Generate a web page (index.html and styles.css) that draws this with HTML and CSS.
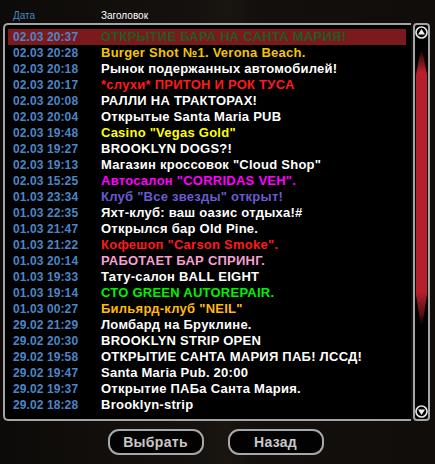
FILE: index.html
```html
<!DOCTYPE html>
<html>
    <head>
        <title>Новости</title>
        <meta charset="UTF-8">
        <link rel="stylesheet" href="styles.css">
    </head>
    <body>
        <div class="dialog">
            <div class="columns">
                <span class="col-date">Дата</span>
                <span class="col-title">Заголовок</span>
            </div>

            <div class="list-wrap">
                <div class="list">
                    <div class="row selected"><span class="date">02.03 20:37</span><span class="title t-green">ОТКРЫТИЕ БАРА НА САНТА МАРИЯ!</span></div>
                    <div class="row"><span class="date">02.03 20:28</span><span class="title t-gold">Burger Shot №1. Verona Beach.</span></div>
                    <div class="row"><span class="date">02.03 20:18</span><span class="title">Рынок подержанных автомобилей!</span></div>
                    <div class="row"><span class="date">02.03 20:17</span><span class="title t-red">*слухи* ПРИТОН И РОК ТУСА</span></div>
                    <div class="row"><span class="date">02.03 20:08</span><span class="title">РАЛЛИ НА ТРАКТОРАХ!</span></div>
                    <div class="row"><span class="date">02.03 20:04</span><span class="title">Открытые Santa Maria PUB</span></div>
                    <div class="row"><span class="date">02.03 19:48</span><span class="title t-yellow">Casino "Vegas Gold"</span></div>
                    <div class="row"><span class="date">02.03 19:27</span><span class="title">BROOKLYN DOGS?!</span></div>
                    <div class="row"><span class="date">02.03 19:13</span><span class="title">Магазин кроссовок "Cloud Shop"</span></div>
                    <div class="row"><span class="date">02.03 15:25</span><span class="title t-magenta">Автосалон "CORRIDAS VEH".</span></div>
                    <div class="row"><span class="date">01.03 23:34</span><span class="title t-slate">Клуб "Все звезды" открыт!</span></div>
                    <div class="row"><span class="date">01.03 22:35</span><span class="title">Яхт-клуб: ваш оазис отдыха!#</span></div>
                    <div class="row"><span class="date">01.03 21:47</span><span class="title">Открылся бар Old Pine.</span></div>
                    <div class="row"><span class="date">01.03 21:22</span><span class="title t-red">Кофешоп "Carson Smoke".</span></div>
                    <div class="row"><span class="date">01.03 20:14</span><span class="title t-pink">РАБОТАЕТ БАР СПРИНГ.</span></div>
                    <div class="row"><span class="date">01.03 19:33</span><span class="title">Тату-салон BALL EIGHT</span></div>
                    <div class="row"><span class="date">01.03 19:14</span><span class="title t-lime">СТО GREEN AUTOREPAIR.</span></div>
                    <div class="row"><span class="date">01.03 00:27</span><span class="title t-orange">Бильярд-клуб "NEIL"</span></div>
                    <div class="row"><span class="date">29.02 21:29</span><span class="title">Ломбард на Бруклине.</span></div>
                    <div class="row"><span class="date">29.02 20:30</span><span class="title">BROOKLYN STRIP OPEN</span></div>
                    <div class="row"><span class="date">29.02 19:58</span><span class="title">ОТКРЫТИЕ САНТА МАРИЯ ПАБ! ЛССД!</span></div>
                    <div class="row"><span class="date">29.02 19:47</span><span class="title">Santa Maria Pub. 20:00</span></div>
                    <div class="row"><span class="date">29.02 19:37</span><span class="title">Открытие ПАБа Санта Мария.</span></div>
                    <div class="row"><span class="date">29.02 18:28</span><span class="title">Brooklyn-strip</span></div>
                </div>

                <div class="scrollbar">
                    <svg class="arrow" width="13" height="13" viewBox="0 0 13 13">
                        <circle cx="6.5" cy="6.5" r="5.5" fill="#000" stroke="#e8e8e8" stroke-width="1.6"/>
                        <path d="M6.5 3 L10 8.5 L3 8.5 Z" fill="#f0f0f0"/>
                    </svg>
                    <div class="track">
                        <div class="thumb"></div>
                    </div>
                    <svg class="arrow" width="13" height="13" viewBox="0 0 13 13">
                        <circle cx="6.5" cy="6.5" r="5.5" fill="#000" stroke="#e8e8e8" stroke-width="1.6"/>
                        <path d="M6.5 10 L10 4.5 L3 4.5 Z" fill="#f0f0f0"/>
                    </svg>
                </div>
            </div>

            <div class="buttons">
                <button class="btn">Выбрать</button>
                <button class="btn">Назад</button>
            </div>
        </div>
    </body>
</html>
```

FILE: styles.css
```css
* {
    box-sizing: border-box;
    margin: 0;
    padding: 0;
}

body {
    width: 435px;
    height: 464px;
    overflow: hidden;
    background: linear-gradient(90deg, #0d0b09 0%, #15110e 45%, #1a1511 52%, #120f0c 60%, #100d0b 100%);
    font-family: 'Liberation Sans', Arial, sans-serif;
    color: #fff;
}

.dialog {
    padding: 8px 5px 0 3px;
}

.columns {
    display: flex;
    height: 15px;
    font-size: 10px;
    line-height: 15px;
}

.col-date {
    width: 98px;
    padding-left: 10px;
    color: #4a86c6;
}

.col-title {
    color: #fff;
}

.list-wrap {
    display: flex;
    gap: 2px;
    height: 398px;
}

.list {
    flex: 1;
    background: #000;
    border: 2px solid #a4a4a4;
    border-right: none;
    border-radius: 5px 0 0 5px;
    padding: 4px 0 0 3px;
    overflow: hidden;
}

.row {
    display: flex;
    height: 16px;
    line-height: 16px;
    font-weight: bold;
    white-space: nowrap;
}

.row.selected {
    background: #7c191d;
    margin-right: 5px;
}

.date {
    width: 93px;
    padding-left: 5px;
    font-size: 12px;
    letter-spacing: 0.1px;
    color: #4a86c6;
}

.title {
    font-size: 13px;
    letter-spacing: 0.25px;
    color: #fff;
}

.t-green { color: #1f5b1d; }
.t-gold { color: #f5c400; }
.t-red { color: #ff1a1a; }
.t-yellow { color: #ffff00; }
.t-magenta { color: #ff00ff; }
.t-slate { color: #6a5ad2; }
.t-pink { color: #f5a0d2; }
.t-lime { color: #00f000; }
.t-orange { color: #ffb90f; }

.scrollbar {
    width: 17px;
    display: flex;
    flex-direction: column;
    align-items: center;
    border: 2px solid #a4a4a4;
    border-radius: 4px;
    background: #000;
}

.arrow {
    flex: none;
    margin: 1px 0;
}

.track {
    flex: 1;
    width: 100%;
    padding: 0 1px;
}

.thumb {
    margin-top: 10px;
    height: 275px;
    clip-path: polygon(42% 0, 58% 0, 100% 9%, 100% 89%, 58% 100%, 42% 100%, 0 89%, 0 9%);
    background: linear-gradient(180deg, #000 0%, #5a1015 3%, #b6202a 8%, #b6202a 88%, #5a1015 96%, #000 100%);
}

.buttons {
    display: flex;
    justify-content: center;
    gap: 24px;
    padding: 8px 2px 0 0;
}

.btn {
    width: 96px;
    height: 26px;
    background: #020202;
    border: 2px solid #a8a8a8;
    border-radius: 11px;
    color: #c8c8c8;
    font-family: 'Liberation Sans', Arial, sans-serif;
    font-size: 14px;
    font-weight: bold;
    letter-spacing: 0.3px;
}
```
